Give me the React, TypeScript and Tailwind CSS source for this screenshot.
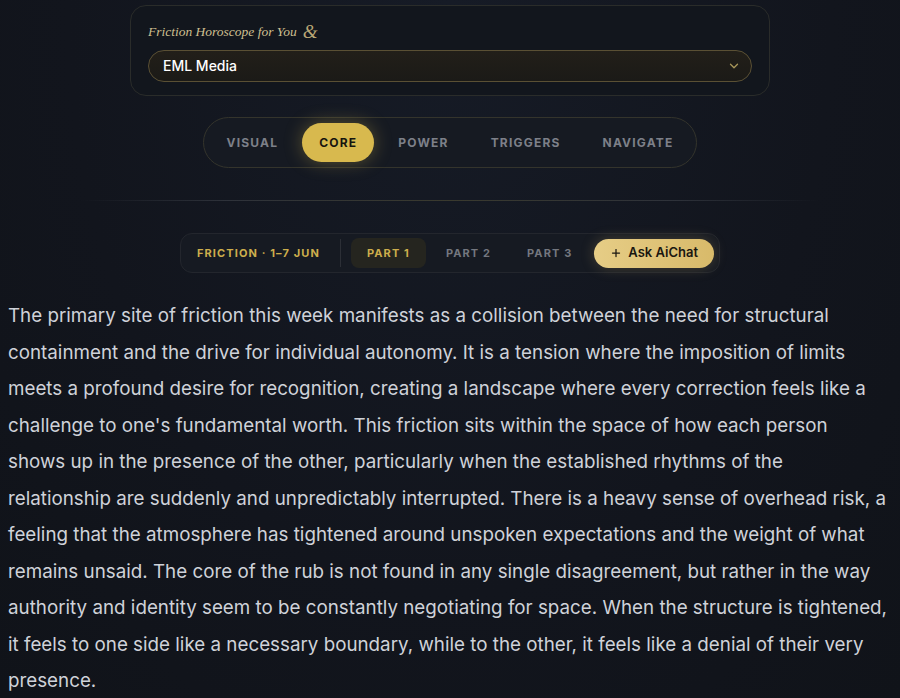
import { ChevronDown, Plus } from 'lucide-react';

const tabs = ['VISUAL', 'CORE', 'POWER', 'TRIGGERS', 'NAVIGATE'];
const parts = ['PART 1', 'PART 2', 'PART 3'];

const body =
  "The primary site of friction this week manifests as a collision between the need for structural containment and the drive for individual autonomy. It is a tension where the imposition of limits meets a profound desire for recognition, creating a landscape where every correction feels like a challenge to one's fundamental worth. This friction sits within the space of how each person shows up in the presence of the other, particularly when the established rhythms of the relationship are suddenly and unpredictably interrupted. There is a heavy sense of overhead risk, a feeling that the atmosphere has tightened around unspoken expectations and the weight of what remains unsaid. The core of the rub is not found in any single disagreement, but rather in the way authority and identity seem to be constantly negotiating for space. When the structure is tightened, it feels to one side like a necessary boundary, while to the other, it feels like a denial of their very presence.";

export default function App() {
  return (
    <div className="min-h-[698px] bg-[radial-gradient(ellipse_at_50%_0%,#161b26_0%,#12151d_60%,#101319_100%)] pt-[5px] font-['Inter',sans-serif] overflow-hidden">
      <div className="mx-auto w-[640px] rounded-2xl border border-[#2a2c2a] bg-[#12161d] px-[17px] pt-4 pb-[13px]">
        <div className="mb-2 flex items-center gap-1.5 font-['Liberation_Serif',serif] text-[13.5px] italic leading-5 text-[#cdbf8f]">
          Friction Horoscope for You <span className="text-[19px] leading-5 text-[#b9a776]">&amp;</span>
        </div>
        <div className="flex h-8 items-center justify-between rounded-full border border-[#5a5034] bg-[linear-gradient(180deg,#221f19,#1b1a17)] pl-[14px] pr-[10px]">
          <span className="text-sm font-medium text-white">EML Media</span>
          <ChevronDown size={14} className="text-[#a8975a]" strokeWidth={2.2} />
        </div>
      </div>

      <div className="mt-[21px] flex justify-center">
        <div className="flex items-center gap-1.5 rounded-full border border-[#34342c] bg-[#161a22] p-[5px]">
          {tabs.map(t => (
            <div
              key={t}
              className={
                t === 'CORE'
                  ? 'flex h-[39px] items-center rounded-full bg-[#d8b94e] px-[17px] text-xs font-bold tracking-[0.1em] text-[#17150f] shadow-[0_0_18px_rgba(216,185,78,0.35)]'
                  : 'flex h-[39px] items-center px-[18px] text-xs font-bold tracking-[0.1em] text-[#7d8089]'
              }
            >
              {t}
            </div>
          ))}
        </div>
      </div>

      <div className="mx-auto mt-8 h-px w-[740px] bg-[linear-gradient(90deg,transparent,#2e323a_20%,#3a3a2e_50%,#2e323a_80%,transparent)]" />

      <div className="mt-8 flex justify-center">
        <div className="flex items-center rounded-xl border border-[#23262d] bg-[#161a22] py-1 pl-4 pr-[5px]">
          <span className="text-[11px] font-bold tracking-[0.1em] text-[#cdae4c]">FRICTION · 1–7 JUN</span>
          <div className="ml-5 mr-2.5 h-7 w-px bg-[#2c2f36]" />
          <div className="flex items-center gap-1">
            {parts.map(p => (
              <div
                key={p}
                className={
                  p === 'PART 1'
                    ? 'flex h-[30px] items-center rounded-lg bg-[#25251f] px-4 text-[11px] font-bold tracking-[0.1em] text-[#cdae4c]'
                    : 'flex h-[30px] items-center px-4 text-[11px] font-bold tracking-[0.1em] text-[#74777f]'
                }
              >
                {p}
              </div>
            ))}
            <button className="ml-0.5 flex h-[29px] items-center gap-1.5 rounded-full bg-[linear-gradient(90deg,#e6cd86,#d8ba6a)] px-4 text-[13px] font-semibold text-[#1a1710] shadow-[0_0_14px_rgba(216,185,106,0.25)]">
              <Plus size={12} strokeWidth={2.5} />
              Ask AiChat
            </button>
          </div>
        </div>
      </div>

      <p className="mt-[25px] pl-2 pr-[11px] text-[18.8px] leading-[36.5px] text-[#cfd2d9]">{body}</p>
    </div>
  );
}
